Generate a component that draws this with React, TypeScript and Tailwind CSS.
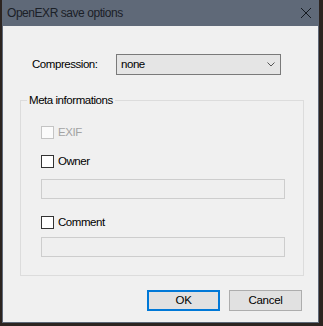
import React from "react"

const ui = { fontFamily: '"Liberation Sans", Arial, sans-serif' }

const Check = ({ label, disabled }: { label: string; disabled?: boolean }) => (
    <div className="flex items-center h-[13px]">
        <span className={"w-[13px] h-[13px] border " + (disabled ? "border-[#c4c4c4] bg-[#fbfbfb]" : "border-[#333333] bg-white")} />
        <span className={"ml-[4px] text-[11.5px] tracking-[-0.45px] leading-[13px] " + (disabled ? "text-[#a3a3a3]" : "text-black")}>{label}</span>
    </div>
)

const Field = () => <div className="w-[244px] h-[20px] border border-[#cdcdcd] bg-[#efefef]" />

const App = () => {
    return (
        <div className="w-[323px] h-[326px] bg-[#2c2420] flex pl-[2px] pr-[4px] pb-[3px]" style={ui}>
            <div className="flex flex-col w-full border-x border-b border-[#5f6978] bg-[#f0f0f0]">
                <div className="h-[26px] shrink-0 bg-[#5f6978] flex items-center justify-between pl-[4px] pr-[7px]">
                    <span className="text-[12px] tracking-[-0.45px] text-[#1b2027]">OpenEXR save options</span>
                    <svg width="10" height="10" viewBox="0 0 10 10">
                        <path d="M0 0 L10 10 M10 0 L0 10" stroke="#151a20" strokeWidth="1" />
                    </svg>
                </div>

                <div className="flex items-center mt-[28px] text-[11.5px] tracking-[-0.45px]">
                    <span className="ml-[29px] w-[84px]">Compression:</span>
                    <div className="w-[165px] h-[21px] border border-[#7a7a7a] bg-[#e5e5e5] flex items-center pl-[4px]">
                        <span>none</span>
                        <svg className="ml-auto mr-[5px]" width="8" height="5" viewBox="0 0 8 5">
                            <path d="M0.5 0.5 L4 4 L7.5 0.5" fill="none" stroke="#555" strokeWidth="1" />
                        </svg>
                    </div>
                </div>

                <div className="mt-[25px] ml-[17px] w-[284px] border border-[#dcdcdc] flex flex-col pb-[18px]">
                    <span className="-mt-[8px] ml-[6px] px-[2px] w-fit bg-[#f0f0f0] text-[11.5px] tracking-[-0.45px] leading-[14px]">Meta informations</span>
                    <div className="pl-[20px] flex flex-col">
                        <div className="mt-[19px]"><Check label="EXIF" disabled /></div>
                        <div className="mt-[16px]"><Check label="Owner" /></div>
                        <div className="mt-[11px]"><Field /></div>
                        <div className="mt-[17px]"><Check label="Comment" /></div>
                        <div className="mt-[8px]"><Field /></div>
                    </div>
                </div>

                <div className="flex mt-[14px] text-[11.5px] tracking-[-0.3px]">
                    <button className="ml-[144px] w-[73px] h-[21px] border-2 border-[#0078d7] bg-[#e1e1e1] text-black">OK</button>
                    <button className="ml-[9px] w-[73px] h-[21px] border border-[#adadad] bg-[#e1e1e1] text-black">Cancel</button>
                </div>
            </div>
        </div>
    )
}

export default App
